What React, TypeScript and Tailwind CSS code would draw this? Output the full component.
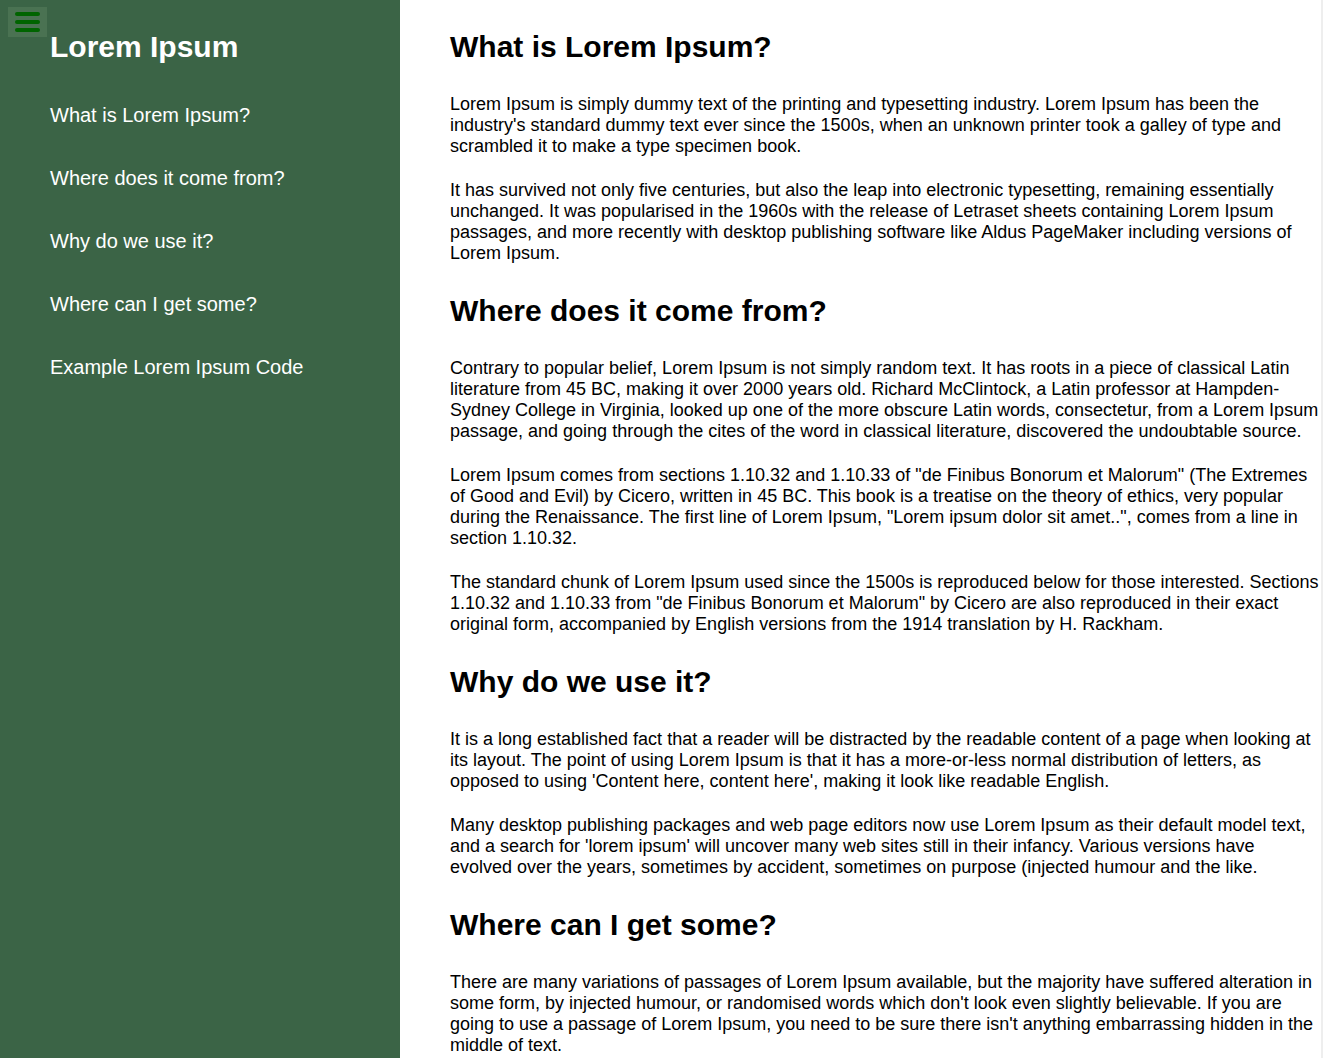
import React from 'react';

const sections = [
  {
    title: 'What is Lorem Ipsum?',
    paragraphs: [
      "Lorem Ipsum is simply dummy text of the printing and typesetting industry. Lorem Ipsum has been the industry's standard dummy text ever since the 1500s, when an unknown printer took a galley of type and scrambled it to make a type specimen book.",
      'It has survived not only five centuries, but also the leap into electronic typesetting, remaining essentially unchanged. It was popularised in the 1960s with the release of Letraset sheets containing Lorem Ipsum passages, and more recently with desktop publishing software like Aldus PageMaker including versions of Lorem Ipsum.',
    ],
  },
  {
    title: 'Where does it come from?',
    paragraphs: [
      'Contrary to popular belief, Lorem Ipsum is not simply random text. It has roots in a piece of classical Latin literature from 45 BC, making it over 2000 years old. Richard McClintock, a Latin professor at Hampden-Sydney College in Virginia, looked up one of the more obscure Latin words, consectetur, from a Lorem Ipsum passage, and going through the cites of the word in classical literature, discovered the undoubtable source.',
      'Lorem Ipsum comes from sections 1.10.32 and 1.10.33 of "de Finibus Bonorum et Malorum" (The Extremes of Good and Evil) by Cicero, written in 45 BC. This book is a treatise on the theory of ethics, very popular during the Renaissance. The first line of Lorem Ipsum, "Lorem ipsum dolor sit amet..", comes from a line in section 1.10.32.',
      'The standard chunk of Lorem Ipsum used since the 1500s is reproduced below for those interested. Sections 1.10.32 and 1.10.33 from "de Finibus Bonorum et Malorum" by Cicero are also reproduced in their exact original form, accompanied by English versions from the 1914 translation by H. Rackham.',
    ],
  },
  {
    title: 'Why do we use it?',
    paragraphs: [
      "It is a long established fact that a reader will be distracted by the readable content of a page when looking at its layout. The point of using Lorem Ipsum is that it has a more-or-less normal distribution of letters, as opposed to using 'Content here, content here', making it look like readable English.",
      "Many desktop publishing packages and web page editors now use Lorem Ipsum as their default model text, and a search for 'lorem ipsum' will uncover many web sites still in their infancy. Various versions have evolved over the years, sometimes by accident, sometimes on purpose (injected humour and the like.",
    ],
  },
  {
    title: 'Where can I get some?',
    paragraphs: [
      "There are many variations of passages of Lorem Ipsum available, but the majority have suffered alteration in some form, by injected humour, or randomised words which don't look even slightly believable. If you are going to use a passage of Lorem Ipsum, you need to be sure there isn't anything embarrassing hidden in the middle of text.",
    ],
  },
];

const navItems = [
  'What is Lorem Ipsum?',
  'Where does it come from?',
  'Why do we use it?',
  'Where can I get some?',
  'Example Lorem Ipsum Code',
];

export default function App() {
  return (
    <div className="flex h-screen overflow-hidden bg-white font-['Liberation_Sans',Arial,sans-serif]">
      {/* Sidebar */}
      <aside className="relative w-[400px] shrink-0 bg-[#3b6446] pl-[50px] pt-[30px]">
        <button className="absolute left-[8px] top-[7px] flex h-[30px] w-[39px] flex-col items-center justify-center gap-[4px] bg-[#4a7252]">
          <span className="block h-[4px] w-[25px] rounded-full bg-[#006400]" />
          <span className="block h-[4px] w-[25px] rounded-full bg-[#006400]" />
          <span className="block h-[4px] w-[25px] rounded-full bg-[#006400]" />
        </button>
        <h1 className="text-[30px] font-bold leading-[34px] text-white">Lorem Ipsum</h1>
        <nav className="mt-[40px] flex flex-col gap-[40px]">
          {navItems.map((item) => (
            <a key={item} href="#" className="text-[20px] leading-[23px] text-white">
              {item}
            </a>
          ))}
        </nav>
      </aside>

      {/* Content */}
      <main className="flex-1 pl-[50px] pt-[30px] text-black">
        {sections.map((section, i) => (
          <section key={section.title}>
            <h2 className={`text-[30px] font-bold leading-[34px] mb-[29.5px] ${i === 0 ? 'mt-0' : 'mt-[30.5px]'}`}>
              {section.title}
            </h2>
            {section.paragraphs.map((p, j) => (
              <p key={j} className="mb-[23px] text-[18px] leading-[21px]">
                {p}
              </p>
            ))}
          </section>
        ))}
      </main>
      <div className="w-[2px] shrink-0 bg-[#eeeeee]" />
    </div>
  );
}
